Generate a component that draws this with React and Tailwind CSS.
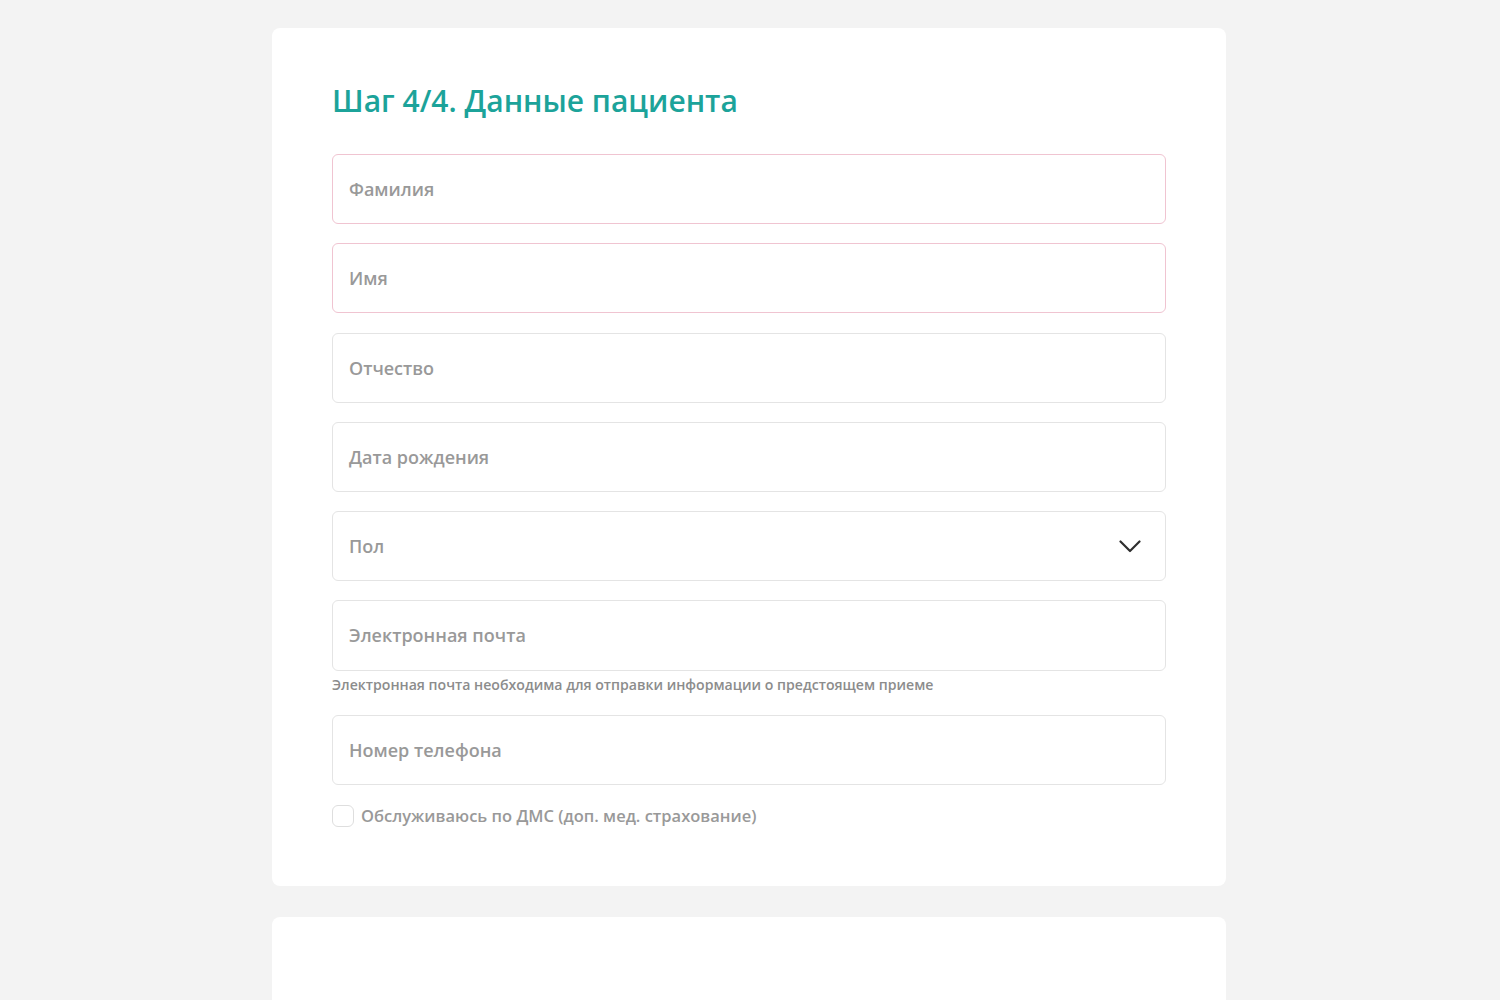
const font = { fontFamily: '"Open Sans", "Noto Sans", sans-serif' };

function Chevron() {
    return (
        <svg width="22" height="13" viewBox="0 0 22 13" fill="none" className="mr-[2px]">
            <path d="M1.5 1.5 L11 11 L20.5 1.5" stroke="#2f2f2f" strokeWidth="2.2" strokeLinecap="round" strokeLinejoin="round" />
        </svg>
    );
}

function Field({ label, error, select, className = '' }) {
    return (
        <div
            className={`h-[70px] rounded-[6px] border bg-white flex items-center justify-between pl-[16px] pr-[22px] ${
                error ? 'border-[#f0c4d1]' : 'border-[#e4e4e4]'
            } ${className}`}
        >
            <span className="text-[18px] font-semibold text-[#999]">{label}</span>
            {select && <Chevron />}
        </div>
    );
}

export default function App() {
    return (
        <div className="min-h-screen bg-[#f3f3f3] pt-[28px]" style={font}>
            <div className="w-[954px] ml-[272px]">
                {/* Patient data card */}
                <div className="bg-white rounded-[8px] px-[60px] pt-[54px] pb-[59px]">
                    <h2 className="text-[30px] leading-[38px] font-semibold text-[#1ca39a] mb-[34px]">
                        Шаг 4/4. Данные пациента
                    </h2>
                    <div className="flex flex-col">
                        <Field label="Фамилия" error />
                        <Field label="Имя" error className="mt-[19px]" />
                        <Field label="Отчество" className="mt-[20px]" />
                        <Field label="Дата рождения" className="mt-[19px]" />
                        <Field label="Пол" select className="mt-[19px]" />
                        <Field label="Электронная почта" className="mt-[19px] h-[71px]" />
                        <p className="mt-[4px] text-[14.1px] leading-[20px] font-semibold text-[#8c8c8c]">
                            Электронная почта необходима для отправки информации о предстоящем приеме
                        </p>
                        <Field label="Номер телефона" className="mt-[20px]" />
                    </div>
                    <label className="flex items-center gap-[7px] mt-[20px] h-[22px]">
                        <span className="w-[22px] h-[22px] rounded-[6px] border border-[#dedede] bg-white" />
                        <span className="text-[16.5px] leading-[22px] font-semibold text-[#999]">
                            Обслуживаюсь по ДМС (доп. мед. страхование)
                        </span>
                    </label>
                </div>

                {/* Next card, cut by the window */}
                <div className="bg-white rounded-t-[8px] mt-[31px] h-[200px]" />
            </div>
        </div>
    );
}
